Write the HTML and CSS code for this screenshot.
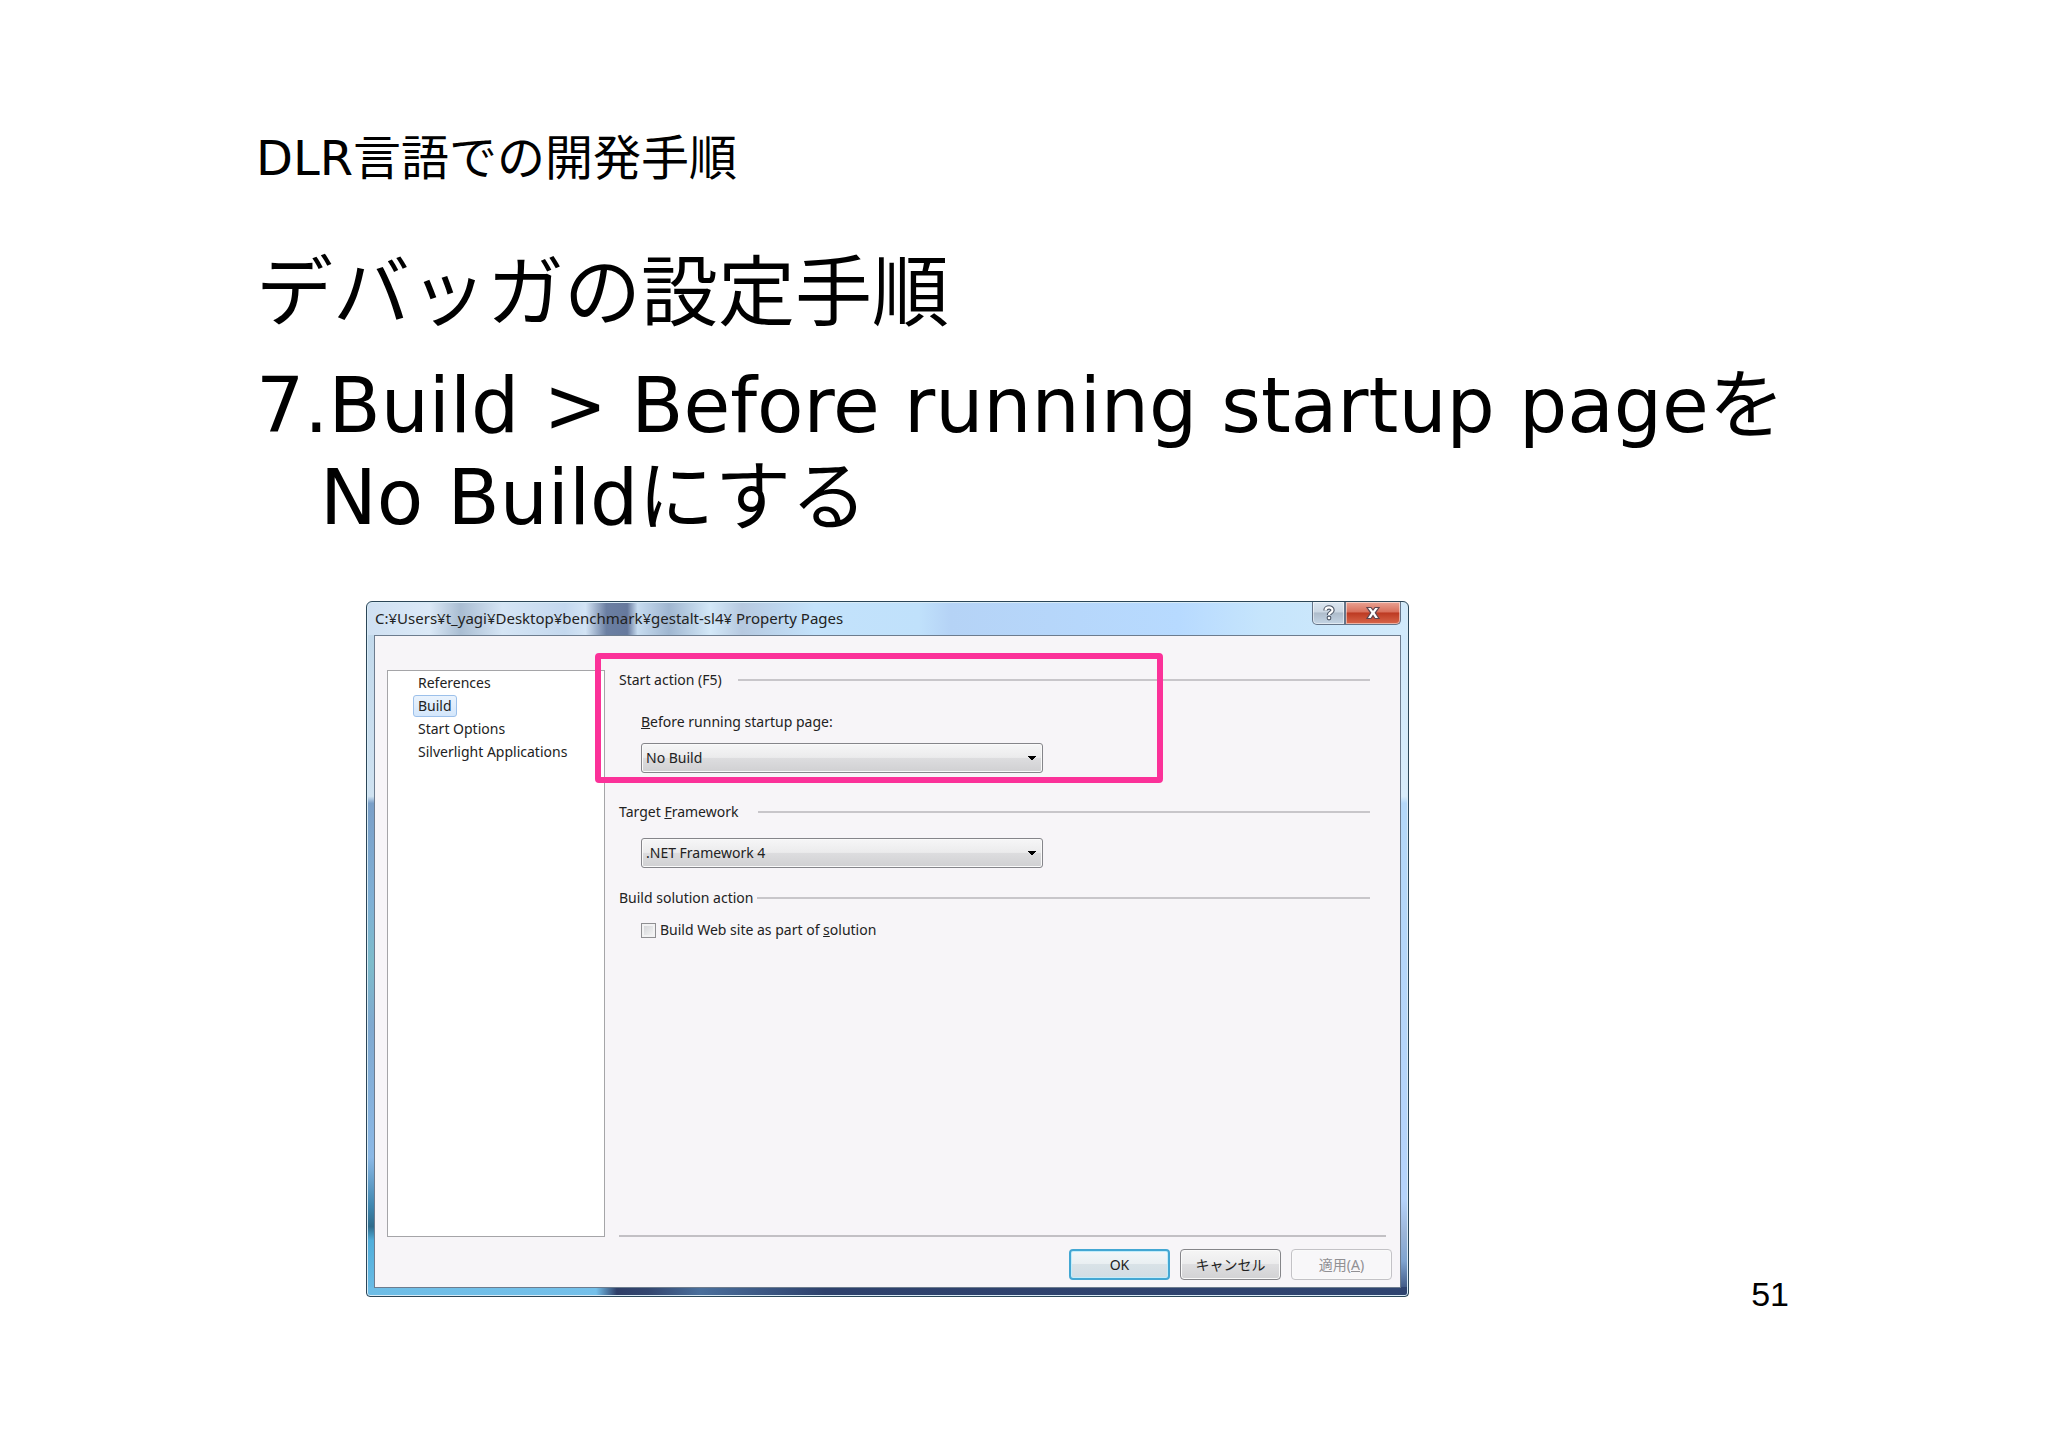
FILE: index.html
```html
<!DOCTYPE html>
<html lang="ja">
<head>
    <meta charset="UTF-8">
    <meta name="viewport" content="width=device-width, initial-scale=1.0">
    <title>DLR言語での開発手順</title>
    <link rel="stylesheet" href="styles.css">
</head>
<body>
    <main class="slide">
        <p class="section">DLR言語での開発手順</p>
        <h1>デバッガの設定手順</h1>
        <p class="step">7.Build &gt; Before running startup pageを<br>No Buildにする</p>

        <div class="row">
            <!-- property pages window -->
            <section class="window">
                <header class="titlebar">
                    <h2>C:¥Users¥t_yagi¥Desktop¥benchmark¥gestalt-sl4¥ Property Pages</h2>
                    <div class="caption">
                        <button class="help" type="button" aria-label="Help">
                            <svg width="14" height="16" viewBox="0 0 14 16">
                                <path d="M3.5 5.5C3.5 1.5 10.5 1.5 10.5 5.2C10.5 7.6 7 7.4 7 10" fill="none" stroke="#4d5666" stroke-width="4.4"/>
                                <circle cx="7" cy="13" r="2.4" fill="#4d5666"/>
                                <path d="M3.5 5.5C3.5 1.5 10.5 1.5 10.5 5.2C10.5 7.6 7 7.4 7 10" fill="none" stroke="#fff" stroke-width="2.2"/>
                                <circle cx="7" cy="13" r="1.3" fill="#fff"/>
                            </svg>
                        </button>
                        <button class="close" type="button" aria-label="Close">
                            <svg width="16" height="14" viewBox="0 0 16 14">
                                <path d="M2 1.5H6L8 4L10 1.5H14L10.3 6.8L14 12.5H10L8 9.6L6 12.5H2L5.7 6.8Z" fill="#fff" stroke="#5f4650" stroke-width="1.2"/>
                            </svg>
                        </button>
                    </div>
                </header>

                <form class="client">
                    <nav class="pages">
                        <ul>
                            <li><a href="#references">References</a></li>
                            <li><a class="selected" href="#build">Build</a></li>
                            <li><a href="#start">Start Options</a></li>
                            <li><a href="#silverlight">Silverlight Applications</a></li>
                        </ul>
                    </nav>
                    <div class="settings">
                        <section class="group start">
                            <h3>Start action (F5)</h3>
                            <label for="before"><u>B</u>efore running startup page:</label>
                            <select id="before">
                                <option>No Build</option>
                            </select>
                            <div class="marker"></div>
                        </section>
                        <section class="group target">
                            <h3><label for="framework">Target <u>F</u>ramework</label></h3>
                            <select id="framework">
                                <option>.NET Framework 4</option>
                            </select>
                        </section>
                        <section class="group solution">
                            <h3>Build solution action</h3>
                            <label class="check"><input type="checkbox"><span>Build Web site as part of <u>s</u>olution</span></label>
                        </section>
                    </div>
                    <div class="buttons">
                        <button class="ok" type="button">OK</button>
                        <button type="button">キャンセル</button>
                        <button type="button" disabled>適用(<u>A</u>)</button>
                    </div>
                </form>
            </section>
            <div class="page-no">51</div>
        </div>
    </main>
</body>
</html>
```
FILE: styles.css
```css
* {
    box-sizing: border-box;
}
body {
    margin: 0;
    background: #fff;
    color: #000;
    font-family: "DejaVu Sans", "Noto Sans CJK JP", sans-serif;
}
.slide {
    padding: 128px 12.5% 136px;
}

/* slide text */
.section {
    margin: 0;
    font-size: 48px;
    line-height: 60px;
}
h1 {
    margin: 60px 0 0;
    font-size: 77px;
    font-weight: normal;
    line-height: 92px;
}
.step {
    margin: 20px 0 0;
    padding-left: 64px;
    font-size: 76px;
    line-height: 92px;
    text-indent: -64px;
}
.row {
    display: flex;
    justify-content: space-between;
    align-items: flex-end;
    margin-top: 57px;
}
.page-no {
    padding-right: 3px;
    font: 34px/34px "Liberation Sans", Arial, sans-serif;
}

/* window */
.window {
    width: 1043px;
    margin: 0 0 14px 110px;
    padding: 0 7px 8px;
    border: 1px solid #2b4658;
    border-radius: 6px 6px 4px 4px;
    background:
        linear-gradient(90deg, #6dbde6, #74c0ea 22%, #2f3f68 24%, #33466f 27%, #4a6f9c 32%, #2e416c 44%, #2f4470) bottom / 100% 9px no-repeat,
        linear-gradient(90deg, #cfe0f2, #dbe9f7 6%, #a9bdd2 9%, #d5e5f5 13%, #c4d8ee 19%, #d3e4f5 21%, #6b7fa2 23%, #66799d 25%, #c7dcf0 26%, #9fb6d0 29%, #d3e8f8 33%, #b6c9e0 36%, #c3e2fb 43%, #c0e1fb 53%, #b5d3f6 56%, #b7daff 78%, #c6e5fc 86%, #d2eafb) top / 100% 33px no-repeat,
        linear-gradient(#bfd7ea, #cfe2f1 28%, #7a9fc8 29%, #7fb0d6 43%, #7dbccb 52%, #7fa9d0 61%, #8bb8e6 80%, #3f87b0 87%, #2f6c8c 90%, #50aedb 92%, #6dbde6) left / 50% 100% no-repeat,
        linear-gradient(#cfe8fb, #d8ecfa 28%, #b4d8f8 29%, #b5d3fb 86%, #9bb5d8 91%, #7fa4d0 95%, #2f4470) right / 50% 100% no-repeat;
    box-shadow: inset 0 0 0 1px #d8ebf6;
    color: #222;
    font: 14px/20px "Noto Sans", "Noto Sans CJK JP", sans-serif;
}
.titlebar {
    display: flex;
    justify-content: space-between;
    height: 33px;
}
h2 {
    margin: 6px 0 0 1px;
    font-size: 15px;
    font-weight: normal;
    line-height: 20px;
}
.caption {
    display: flex;
    height: 23px;
}
.caption button {
    display: flex;
    justify-content: center;
    align-items: center;
    padding: 0;
    border: 1px solid #657488;
    border-top: 0;
    box-shadow: inset 0 0 0 1px #ffffff80;
}
.help {
    width: 33px;
    border-radius: 0 0 0 5px;
    background: linear-gradient(#dbe6f1, #cbd7e3 45%, #aebccb 50%, #c4d5e5);
}
.close {
    width: 56px;
    border-radius: 0 0 5px 0;
    background: linear-gradient(#e9a293, #d8705c 45%, #bd3a22 50%, #d8664a);
}
.client {
    display: grid;
    grid-template-columns: 218px 1fr;
    grid-template-rows: 567px auto;
    column-gap: 14px;
    padding: 34px 8px 7px 12px;
    border: 1px solid #6d7c8e;
    background: #f7f5f8;
}

/* page list */
.pages {
    border: 1px solid #a5a5a8;
    background: #fff;
}
ul {
    margin: 0;
    padding: 1px 0 0 25px;
    list-style: none;
}
li {
    height: 23px;
}
li a {
    display: inline-block;
    padding: 0 4px;
    border: 1px solid transparent;
    border-radius: 3px;
    color: inherit;
    text-decoration: none;
}
li .selected {
    border-color: #9cc0ea;
    background: linear-gradient(#eaf3fd, #d3e6fb);
}

/* settings */
.settings {
    margin-right: 6px;
    border-bottom: 2px solid #c2c0c4;
}
.group {
    position: relative;
    padding: 0 16px 0 0;
}
h3 {
    display: flex;
    align-items: center;
    gap: 16px;
    margin: 0;
    font-size: 14px;
    font-weight: normal;
    line-height: 20px;
}
h3::after {
    content: "";
    flex: 1;
    height: 2px;
    background: #c8c6ca;
}
.target h3 {
    gap: 20px;
}
.solution h3 {
    gap: 4px;
}
.start > label {
    display: block;
    margin: 22px 0 0 22px;
}
select {
    display: block;
    appearance: none;
    width: 402px;
    height: 30px;
    margin: 11px 0 0 22px;
    padding: 0 4px;
    border: 1px solid #85858a;
    border-radius: 3px;
    background:
        conic-gradient(from -45deg at 50% 100%, #000 90deg, transparent 0) right 5px center / 10px 5px no-repeat,
        linear-gradient(#f6f6f7, #ebebec 48%, #dddddf 50%, #d0d0d2);
    box-shadow: inset 0 0 0 1px #fafafa;
    color: inherit;
    font: inherit;
}
.target {
    margin-top: 29px;
}
.target select {
    margin-top: 16px;
}
.solution {
    margin-top: 20px;
}
.check {
    display: flex;
    align-items: center;
    gap: 4px;
    width: fit-content;
    margin: 12px 0 0 22px;
}
.check input {
    appearance: none;
    width: 15px;
    height: 15px;
    margin: 0;
    border: 1px solid #8f8f92;
    background: linear-gradient(135deg, #cfd0d4, #f8f8f8);
    box-shadow: inset 0 0 0 2px #f2f2f3;
}
/* pink frame drawn over the group */
.marker {
    position: absolute;
    inset: -17px auto auto -24px;
    width: 568px;
    height: 130px;
    border: 6px solid #fb3199;
    border-radius: 4px;
    pointer-events: none;
}

/* bottom buttons */
.buttons {
    grid-column: 1 / -1;
    display: flex;
    justify-content: flex-end;
    gap: 10px;
    margin-top: 12px;
}
.buttons button {
    width: 101px;
    height: 31px;
    padding: 0;
    border: 1px solid #858589;
    border-radius: 4px;
    background: linear-gradient(#f5f5f5, #ececed 48%, #dedee0 50%, #d2d2d4);
    box-shadow: inset 0 0 0 1px #fafafa;
    color: inherit;
    font: inherit;
}
.buttons .ok {
    border: 2px solid #43a7d3;
    background: linear-gradient(#f3f7f9, #e9eff2 48%, #d9e2e7 50%, #d0dde4);
    box-shadow: inset 0 0 0 1px #c2ecfa;
}
.buttons button:disabled {
    border-color: #c3c2c6;
    background: #f8f7f9;
    color: #919094;
}
```
